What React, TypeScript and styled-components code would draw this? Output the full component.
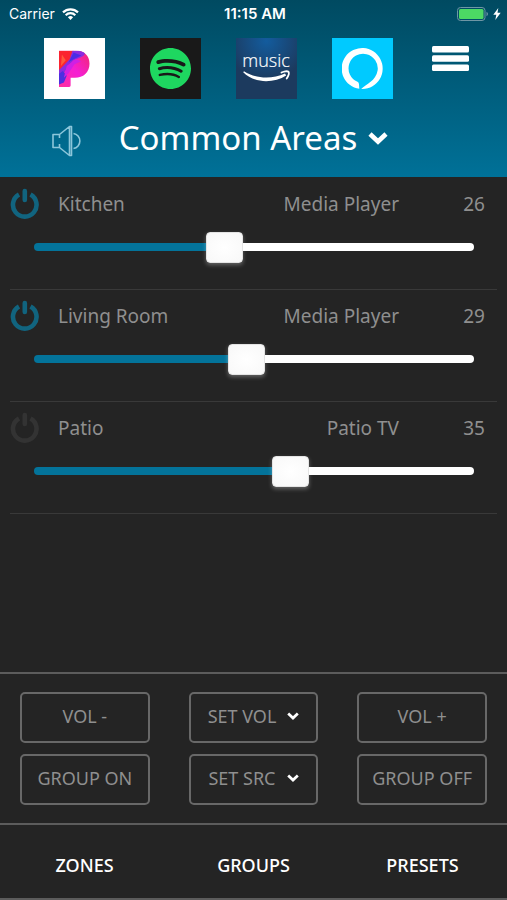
import React, { useState } from 'react';
import styled, { createGlobalStyle } from 'styled-components';
import { SiSpotify } from 'react-icons/si';

const ACCENT = '#03739a';
const SURFACE = '#242424';
const MUTED = '#8f8f8f';
const LINE = '#5c5c5c';
const MAX_VOLUME = 60;

const GlobalStyle = createGlobalStyle`
  *, *::before, *::after { box-sizing: border-box; }
  body { margin: 0; background: ${SURFACE}; }
  button, input { font: inherit; color: inherit; margin: 0; }
`;

const Screen = styled.div`
  display: flex;
  flex-direction: column;
  min-height: 100vh;
  background: ${SURFACE};
  color: ${MUTED};
  font-family: 'Noto Sans', 'Open Sans', sans-serif;
`;

const Header = styled.header`
  background: linear-gradient(#004a61, #007198);
  color: #fff;
  padding-bottom: 4px;
`;

const StatusBar = styled.div`
  display: grid;
  grid-template-columns: 1fr auto 1fr;
  align-items: center;
  height: 28px;
  padding: 0 6px 0 9px;
  font: 400 14px/28px Inter, Roboto, sans-serif;
`;

const StatusGroup = styled.div<{ $end?: boolean }>`
  display: flex;
  align-items: center;
  gap: ${p => (p.$end ? 4 : 7)}px;
  justify-content: ${p => (p.$end ? 'flex-end' : 'flex-start')};
`;

const Clock = styled.time`
  font-size: 15px;
  font-weight: 600;
`;

const Services = styled.nav`
  display: flex;
  align-items: flex-start;
  gap: 35px;
  padding: 10px 38px 0 44px;
`;

const Tile = styled.button<{ $bg: string }>`
  display: grid;
  place-items: center;
  width: 61px;
  height: 61px;
  padding: 0;
  border: 0;
  background: ${p => p.$bg};
  cursor: pointer;
`;

const IconButton = styled.button`
  display: grid;
  place-items: center;
  padding: 0;
  border: 0;
  background: none;
  cursor: pointer;
`;

const MenuButton = styled(IconButton)`
  margin: 8px 0 0 auto;
`;

const TitleRow = styled.div`
  display: grid;
  grid-template-columns: 1fr auto 1fr;
  align-items: center;
  height: 64px;
  margin-top: 10px;
  padding: 0 52px;
`;

const ZoneButton = styled.button`
  display: flex;
  align-items: center;
  gap: 11px;
  height: 64px;
  padding: 0 0 6px;
  border: 0;
  background: none;
  font-size: 33px;
  line-height: 44px;
  white-space: nowrap;
  cursor: pointer;
`;

const Rooms = styled.main`
  flex: 1;
  padding: 1px 10px 0;
`;

const Room = styled.section`
  height: 112px;
  border-bottom: 1px solid #393939;
`;

const RoomHead = styled.div`
  display: grid;
  grid-template-columns: 30px 1fr auto 86px;
  align-items: center;
  height: 52px;
  padding-right: 12px;
  font-size: 19px;
  line-height: 28px;
`;

const RoomName = styled.label`
  padding-left: 18px;
`;

const Level = styled.output`
  text-align: right;
`;

const SliderBox = styled.div`
  display: grid;
  align-items: center;
  height: 34px;
  margin: 0 23px 0 24px;
`;

const Rail = styled.div`
  grid-area: 1 / 1;
  height: 8px;
  border-radius: 4px;
`;

const Range = styled.input`
  grid-area: 1 / 1;
  z-index: 1;
  appearance: none;
  height: 32px;
  margin: 0 -18px;
  background: transparent;
  cursor: pointer;

  &::-webkit-slider-thumb {
    appearance: none;
    width: 37px;
    height: 31px;
    border: 1px solid #e4e4e4;
    border-radius: 4px;
    background: radial-gradient(#fff, #f8f8f8);
    box-shadow: 0 2px 4px rgba(255, 255, 255, 0.3);
  }
`;

const Controls = styled.section`
  display: grid;
  grid-template-columns: repeat(3, 1fr);
  gap: 11px 39px;
  padding: 18px 20px;
  border-top: 2px solid ${LINE};
`;

const ControlButton = styled.button`
  display: flex;
  align-items: center;
  justify-content: center;
  gap: 11px;
  height: 51px;
  padding: 0 0 4px;
  border: 2px solid #686868;
  border-radius: 5px;
  background: none;
  font-size: 18px;
  line-height: 24px;
  white-space: nowrap;
  cursor: pointer;
`;

const Tabs = styled.nav`
  display: grid;
  grid-template-columns: repeat(3, 1fr);
  border-top: 2px solid ${LINE};
  border-bottom: 2px solid ${LINE};
`;

const Tab = styled.a`
  padding: 12px 0 4px;
  color: #fff;
  font-size: 18px;
  font-weight: 500;
  line-height: 57px;
  text-align: center;
  text-decoration: none;
`;

const Wifi = () => (
  <svg width="17" height="12" viewBox="0 0 17 12" fill="none" stroke="#fff" strokeWidth="2.2" aria-hidden="true">
    <path d="M1 4.4a10.6 10.6 0 0 1 15 0M3.7 7.2a6.8 6.8 0 0 1 9.6 0" />
    <path d="M8.5 12 5.9 9.3a3.7 3.7 0 0 1 5.2 0z" fill="#fff" stroke="none" />
  </svg>
);

const Battery = () => (
  <svg width="32" height="14" viewBox="0 0 32 14" aria-hidden="true">
    <rect x=".5" y=".5" width="27.5" height="13" rx="3" fill="none" stroke="#6f96a5" />
    <rect x="2" y="2" width="24.5" height="10" rx="1.5" fill="#4cd964" />
    <path d="M29.5 4.8c2 .8 2 3.6 0 4.4z" fill="#6f96a5" />
  </svg>
);

const Bolt = () => (
  <svg width="8" height="12" viewBox="0 0 8 12" aria-hidden="true">
    <path d="M5.3 0 .3 6.8h3L2.3 12l5.4-7.2H4.5z" fill="#fff" />
  </svg>
);

const PandoraLogo = () => (
  <svg width="31" height="38" viewBox="0 0 32 38" aria-hidden="true">
    <defs>
      <clipPath id="pandora-shape">
        <path d="M0 0h17.5C26 0 31.5 5.500 31.500 13.500 31.500 22.500 25 28 16.500 28H12v8q0 1.500-1.500 1.500H0z" />
      </clipPath>
      <linearGradient id="pandora-pink" x1="0" y1="1" x2="1" y2="0">
        <stop offset="0" stopColor="#ff2f9c" />
        <stop offset=".5" stopColor="#f51fd4" />
        <stop offset="1" stopColor="#f0286c" />
      </linearGradient>
    </defs>
    <g clipPath="url(#pandora-shape)">
      <rect width="32" height="38" fill="url(#pandora-pink)" />
      <path d="M0 0h15l-3 9-5 6-7 6z" fill="#fb2430" />
      <path d="M14 0h12c2 3 0 6-4 7l-7 3-6 7-5 8-4 2v-7l5-5 6-6z" fill="#8a2be0" />
      <path d="M15 2l8 3-8 4-5 3z" fill="#4a2ce6" />
      <path d="M0 24l4-3 4 5-3 7-5 2z" fill="#4c2fe0" />
      <path d="M8 16l9-7 6 2-7 3-6 9-5 5z" fill="#d020e4" />
      <path d="M3 4l4 6-5 6z" fill="#ff5a3c" />
    </g>
  </svg>
);

const AmazonMusicLogo = () => (
  <svg width="61" height="61" viewBox="0 0 61 61" aria-hidden="true">
    <defs>
      <radialGradient id="music-glow" cx=".5" cy=".05" r=".65">
        <stop offset="0" stopColor="#135c9e" />
        <stop offset="1" stopColor="#1c3a5e" />
      </radialGradient>
    </defs>
    <rect width="61" height="61" fill="url(#music-glow)" />
    <text x="30" y="29" fill="#fff" stroke="#fff" strokeWidth=".2" fontFamily="'Open Sans', sans-serif" fontSize="18" fontWeight="300" textAnchor="middle">
      music
    </text>
    <path d="M8 33.200c12 7.600 28 8.200 41 2.200l1.200 2C38 45.500 18 45.500 7.200 34.300z" fill="#fff" />
    <path d="M45.500 34.500c3-1.400 6.200-1.500 7-.8.7 1-.2 4.300-1.800 6.800" fill="none" stroke="#fff" strokeWidth="1.800" strokeLinecap="round" />
  </svg>
);

const AlexaLogo = () => (
  <svg width="41" height="41" viewBox="0 0 41 41" aria-hidden="true">
    <path
      fill="#fff"
      d="M17.300 40.800A20.500 20.500 0 1 1 20.500 41h-1.300C24 36 34 33 35.600 22.500A14.600 14.600 0 1 0 15.500 33.800Q17 34.500 17 36.500z"
    />
  </svg>
);

const MenuIcon = () => (
  <svg width="37" height="25" viewBox="0 0 37 25" fill="#fff" aria-hidden="true">
    <rect width="37" height="6.500" rx="1.500" />
    <rect y="9.200" width="37" height="6.500" rx="1.500" />
    <rect y="18.400" width="37" height="6.500" rx="1.500" />
  </svg>
);

const SpeakerIcon = () => (
  <svg width="30" height="32" viewBox="0 0 30 32" fill="none" stroke="#8cc6da" strokeWidth="1.600" strokeLinejoin="round" aria-hidden="true">
    <path d="M1 9.500h6.500L17.500 1.500h2v29h-2L7.500 22.500H1zM17.500 1.500v29M7.500 9.500v3.500M7.500 19v3.500" />
    <path d="M21.500 8.500a7.600 7.600 0 0 1 0 15" />
  </svg>
);

const Chevron = ({ size }: { size: number }) => (
  <svg width={size} height={size} viewBox="0 0 20 20" fill="none" stroke="#fff" strokeWidth="4.600" aria-hidden="true">
    <path d="M2 6l8 7.500L18 6" />
  </svg>
);

const PowerIcon = ({ on }: { on: boolean }) => (
  <svg width="30" height="32" viewBox="0 0 30 32" fill="none" stroke={on ? '#11647f' : '#333'} strokeWidth="4.600" aria-hidden="true">
    <path d="M9 6.500a11.800 11.800 0 1 0 11.500 0" />
    <path d="M14.800 3v9" strokeLinecap="round" />
  </svg>
);

interface RoomData {
  name: string;
  source: string;
  volume: number;
  on: boolean;
}

const initialRooms: RoomData[] = [
  { name: 'Kitchen', source: 'Media Player', volume: 26, on: true },
  { name: 'Living Room', source: 'Media Player', volume: 29, on: true },
  { name: 'Patio', source: 'Patio TV', volume: 35, on: false },
];

const railFill = (volume: number) => {
  const percent = (volume / MAX_VOLUME) * 100;
  return `linear-gradient(to right, ${ACCENT} ${percent}%, #fff ${percent}%)`;
};

export default function App() {
  const [rooms, setRooms] = useState(initialRooms);

  const update = (index: number, change: Partial<RoomData>) =>
    setRooms(list => list.map((room, i) => (i === index ? { ...room, ...change } : room)));

  return (
    <Screen>
      <GlobalStyle />
      <Header>
        <StatusBar>
          <StatusGroup>
            Carrier
            <Wifi />
          </StatusGroup>
          <Clock>11:15 AM</Clock>
          <StatusGroup $end>
            <Battery />
            <Bolt />
          </StatusGroup>
        </StatusBar>
        <Services aria-label="Music services">
          <Tile $bg="#fff" aria-label="Pandora"><PandoraLogo /></Tile>
          <Tile $bg="#191919" aria-label="Spotify"><SiSpotify size={41} color="#1ed760" /></Tile>
          <Tile $bg="#1c3a5e" aria-label="Amazon Music"><AmazonMusicLogo /></Tile>
          <Tile $bg="#00caff" aria-label="Alexa"><AlexaLogo /></Tile>
          <MenuButton aria-label="Menu"><MenuIcon /></MenuButton>
        </Services>
        <TitleRow>
          <StatusGroup>
            <IconButton aria-label="Mute"><SpeakerIcon /></IconButton>
          </StatusGroup>
          <ZoneButton>
            Common Areas
            <Chevron size={20} />
          </ZoneButton>
        </TitleRow>
      </Header>

      <Rooms>
        {rooms.map((room, i) => (
          <Room key={room.name}>
            <RoomHead>
              <IconButton
                aria-label={`${room.name} power`}
                aria-pressed={room.on}
                onClick={() => update(i, { on: !room.on })}
              >
                <PowerIcon on={room.on} />
              </IconButton>
              <RoomName htmlFor={`volume-${i}`}>{room.name}</RoomName>
              <span>{room.source}</span>
              <Level htmlFor={`volume-${i}`}>{room.volume}</Level>
            </RoomHead>
            <SliderBox>
              <Rail style={{ background: railFill(room.volume) }} />
              <Range
                id={`volume-${i}`}
                type="range"
                min={0}
                max={MAX_VOLUME}
                value={room.volume}
                onChange={e => update(i, { volume: Number(e.target.value) })}
              />
            </SliderBox>
          </Room>
        ))}
      </Rooms>

      <Controls aria-label="Group controls">
        <ControlButton>VOL -</ControlButton>
        <ControlButton>SET VOL <Chevron size={12} /></ControlButton>
        <ControlButton>VOL +</ControlButton>
        <ControlButton>GROUP ON</ControlButton>
        <ControlButton>SET SRC <Chevron size={12} /></ControlButton>
        <ControlButton>GROUP OFF</ControlButton>
      </Controls>

      <Tabs aria-label="Sections">
        <Tab href="#zones">ZONES</Tab>
        <Tab href="#groups">GROUPS</Tab>
        <Tab href="#presets">PRESETS</Tab>
      </Tabs>
    </Screen>
  );
}
